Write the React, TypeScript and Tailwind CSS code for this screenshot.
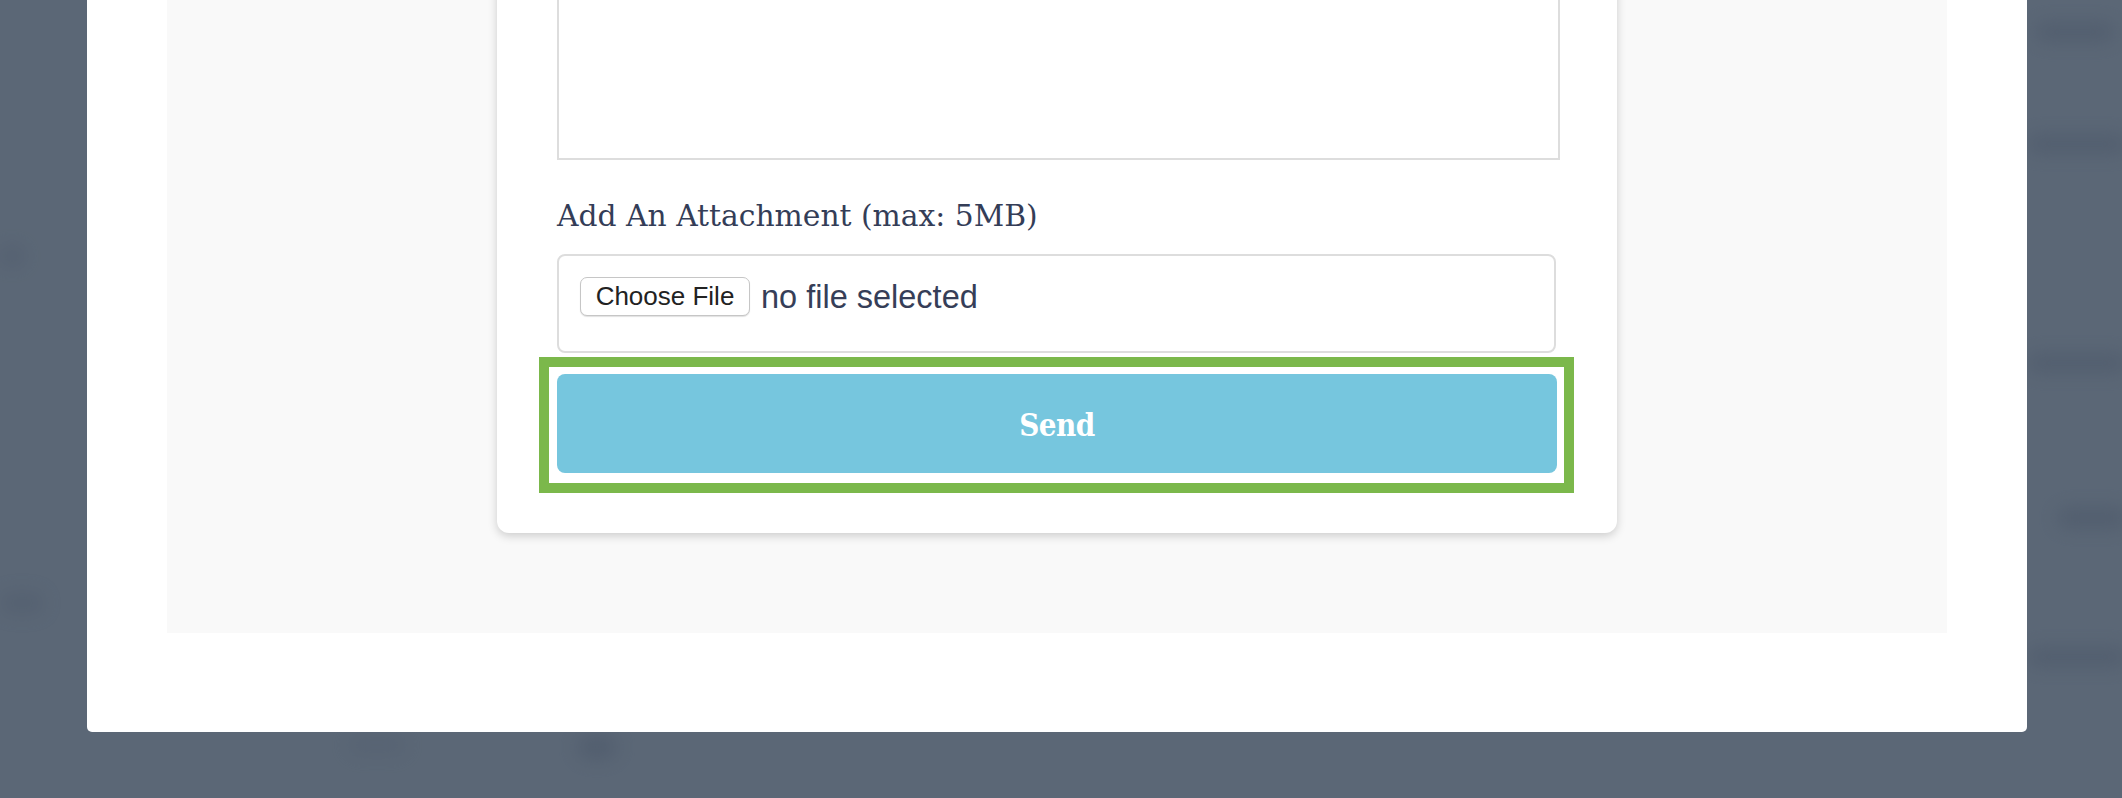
import React from "react";

const slab = { fontFamily: '"DejaVu Serif", "Liberation Serif", serif' };
const sans = { fontFamily: '"Liberation Sans", Arial, sans-serif' };

function Blur({ className }: { className: string }) {
  return <div className={`rounded-full bg-[#4a5668] blur-[9px] ${className}`} />;
}

function Backdrop() {
  return (
    <div className="flex h-full w-full">
      <div className="flex w-[87px] flex-col">
        <Blur className="mt-[246px] h-[20px] w-[24px] opacity-40" />
        <Blur className="mt-[326px] h-[22px] w-[44px] opacity-35" />
      </div>
      <div className="flex flex-1 flex-col justify-end">
        <div className="flex pb-[38px]">
          <Blur className="ml-[260px] h-[22px] w-[60px] opacity-20" />
          <Blur className="ml-[170px] h-[26px] w-[40px] opacity-50" />
        </div>
      </div>
      <div className="flex w-[95px] flex-col items-start">
        <Blur className="ml-[8px] mt-[22px] h-[20px] w-[80px] opacity-50" />
        <Blur className="ml-[0px] mt-[92px] h-[20px] w-[100px] opacity-50" />
        <Blur className="ml-[0px] mt-[199px] h-[20px] w-[100px] opacity-50" />
        <Blur className="ml-[30px] mt-[134px] h-[22px] w-[70px] opacity-50" />
        <Blur className="ml-[0px] mt-[118px] h-[20px] w-[100px] opacity-50" />
      </div>
    </div>
  );
}

export default function App() {
  return (
    <div className="relative h-[798px] w-full overflow-hidden bg-[#5b6776]">
      <Backdrop />
      <div className="absolute inset-0 flex flex-col justify-end pb-[66px] pl-[87px]">
        <div className="w-[1940px] rounded-b-[5px] bg-white px-[80px] pb-[99px]">
          <div className="flex justify-center bg-[#f9f9f9] pb-[100px]">
            <div className="flex w-[1120px] flex-col rounded-b-[12px] bg-white px-[60px] pb-[40px] shadow-[0_3px_10px_rgba(0,0,0,0.18)]">
              <div className="h-[400px] w-[1003px] border-2 border-[#dddddd] bg-white" />
              <label
                style={slab}
                className="mb-[20px] mt-[38px] block text-[29.75px] leading-[36px] text-[#343d57]"
              >
                Add An Attachment (max: 5MB)
              </label>
              <div className="h-[99px] w-[999px] rounded-[8px] border-2 border-[#dddddd] bg-white px-[21px] pt-[21px]">
                <div className="flex items-center">
                  <div
                    style={sans}
                    className="flex h-[39px] w-[170px] items-center justify-center rounded-[7px] border-[1.5px] border-[#c6c6c6] bg-white text-[26px] text-[#222222] shadow-[0_1px_1px_rgba(0,0,0,0.12)]"
                  >
                    Choose File
                  </div>
                  <span
                    style={sans}
                    className="ml-[11px] text-[32.5px] leading-[36px] text-[#363e58]"
                  >
                    no file selected
                  </span>
                </div>
              </div>
              <div className="-ml-[18px] -mr-[17px] mt-[4px] border-[10px] border-[#7bb84b] pb-[10px] pl-[8px] pr-[7px] pt-[7px]">
                <button
                  type="button"
                  style={slab}
                  className="flex h-[99px] w-full items-center justify-center rounded-[8px] bg-[#76c6de] pt-[4px] text-[31px] font-bold tracking-[-0.5px] text-white font-stretch-condensed"
                >
                  Send
                </button>
              </div>
            </div>
          </div>
        </div>
      </div>
    </div>
  );
}
